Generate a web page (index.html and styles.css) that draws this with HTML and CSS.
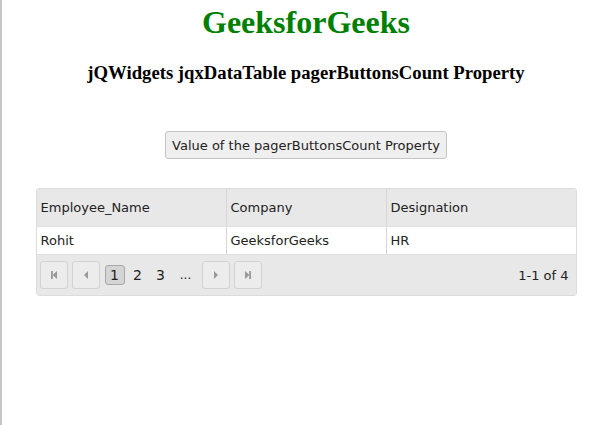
FILE: index.html
```html
<!DOCTYPE html>
<html>
    <head>
        <title>jQWidgets jqxDataTable pagerButtonsCount Property</title>
        <link rel="stylesheet" href="styles.css">
    </head>
    <body>
        <div class="page">
            <h1 class="site-title">GeeksforGeeks</h1>
            <h3 class="demo-title">jQWidgets jqxDataTable pagerButtonsCount Property</h3>

            <div class="button-row">
                <button class="value-btn">Value of the pagerButtonsCount Property</button>
            </div>

            <!-- data table with pager -->
            <div class="data-table">
                <div class="table-row header-row">
                    <div class="cell col-name">Employee_Name</div>
                    <div class="cell col-company">Company</div>
                    <div class="cell col-designation">Designation</div>
                </div>
                <div class="table-row body-row">
                    <div class="cell col-name">Rohit</div>
                    <div class="cell col-company">GeeksforGeeks</div>
                    <div class="cell col-designation">HR</div>
                </div>
                <div class="pager">
                    <div class="pager-left">
                        <div class="pager-btn">
                            <svg width="10" height="10" viewBox="0 0 10 10"><rect x="2" y="1" width="1.8" height="8" fill="#999"/><polygon points="8,1 3.6,5 8,9" fill="#999"/></svg>
                        </div>
                        <div class="pager-btn">
                            <svg width="10" height="10" viewBox="0 0 10 10"><polygon points="7,1 3,5 7,9" fill="#999"/></svg>
                        </div>
                        <div class="page-nums">
                            <span class="page-num current">1</span>
                            <span class="page-num">2</span>
                            <span class="page-num">3</span>
                            <span class="page-num dots">...</span>
                        </div>
                        <div class="pager-btn">
                            <svg width="10" height="10" viewBox="0 0 10 10"><polygon points="3,1 7,5 3,9" fill="#999"/></svg>
                        </div>
                        <div class="pager-btn">
                            <svg width="10" height="10" viewBox="0 0 10 10"><polygon points="2,1 6.4,5 2,9" fill="#999"/><rect x="6.2" y="1" width="1.8" height="8" fill="#999"/></svg>
                        </div>
                    </div>
                    <div class="pager-info">1-1 of 4</div>
                </div>
            </div>
        </div>
    </body>
</html>
```

FILE: styles.css
```css
html {
    min-height: 100%;
    border-left: 2px solid #c6c6c6;
    background-color: #ffffff;
}

body {
    margin: 0 8px;
}

.page {
    display: flex;
    flex-direction: column;
    align-items: center;
}

.site-title {
    font-family: "Liberation Serif", serif;
    font-size: 32px;
    color: green;
    margin: 4px 0 21px 0;
}

.demo-title {
    font-family: "Liberation Serif", serif;
    font-size: 18.7px;
    margin: 0;
}

.button-row {
    margin-top: 47px;
}

.value-btn {
    font-family: "DejaVu Sans", Verdana, sans-serif;
    font-size: 13px;
    height: 28px;
    padding: 0 6px;
    color: #222;
    background-color: #efefef;
    border: 1px solid #c4c4c4;
    border-radius: 3px;
}

/* table */
.data-table {
    margin-top: 29px;
    width: 541px;
    border: 1px solid #dcdcdc;
    border-radius: 3px;
    font-family: "DejaVu Sans", Verdana, sans-serif;
    font-size: 13px;
    color: #222;
    box-sizing: border-box;
}

.table-row {
    display: flex;
}

.header-row {
    height: 37px;
    background-color: #e8e8e8;
    border-bottom: 1px solid #e0e0e0;
}

.body-row {
    height: 27px;
    background-color: #ffffff;
}

.cell {
    display: flex;
    align-items: center;
    padding-left: 4px;
    box-sizing: border-box;
}

.col-name {
    width: 190px;
    border-right: 1px solid #d6d6d6;
}
.col-company {
    width: 160px;
    border-right: 1px solid #d6d6d6;
}
.col-designation {
    flex: 1;
}

.pager {
    display: flex;
    align-items: center;
    justify-content: space-between;
    height: 40px;
    background-color: #e8e8e8;
    border-top: 1px solid #e0e0e0;
    padding: 0 7px 0 3px;
}

.pager-left {
    display: flex;
    align-items: center;
    gap: 4px;
}

.pager-btn {
    display: flex;
    align-items: center;
    justify-content: center;
    width: 28px;
    height: 28px;
    box-sizing: border-box;
    border: 1px solid #d2d2d2;
    border-radius: 3px;
    background-color: #ececec;
}

.page-nums {
    display: flex;
    align-items: center;
    gap: 3px;
    margin: 0 0 0 1px;
    font-size: 14px;
}

.page-num {
    display: inline-block;
    width: 20px;
    height: 20px;
    line-height: 20px;
    text-align: center;
}

.page-num.current {
    box-sizing: border-box;
    background-color: #d4d4d4;
    border: 1px solid #a8a8a8;
    border-radius: 3px;
    line-height: 18px;
}

.page-num.dots {
    width: 24px;
    font-size: 12px;
}

.pager-info {
    font-size: 13px;
}
```
